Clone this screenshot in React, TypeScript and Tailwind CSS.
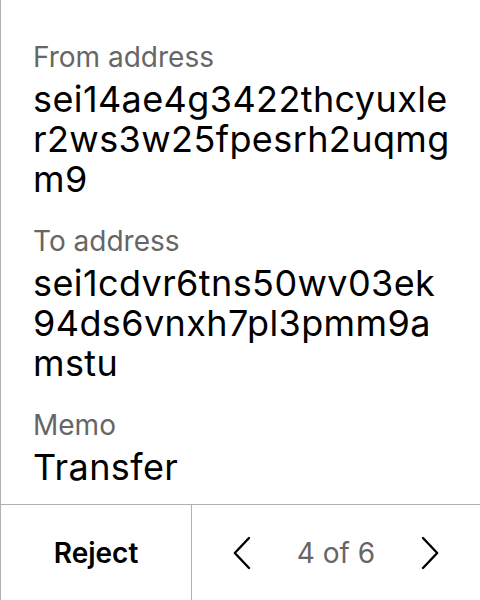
const fields = [
  { label: "From address", value: "sei14ae4g3422thcyuxler2ws3w25fpesrh2uqmgm9" },
  { label: "To address", value: "sei1cdvr6tns50wv03ek94ds6vnxh7pl3pmm9amstu" },
  { label: "Memo", value: "Transfer" },
];

function Chevron({ dir }: { dir: "left" | "right" }) {
  return (
    <svg width="18" height="34" viewBox="0 0 18 34" fill="none" stroke="black" strokeWidth="2.4" strokeLinecap="round" strokeLinejoin="round">
      <polyline points={dir === "left" ? "16,2 1.8,17 16,32" : "2,2 16.2,17 2,32"} />
    </svg>
  );
}

export default function App() {
  return (
    <div
      className="w-[480px] h-[600px] flex flex-col bg-white border-l border-[#b0b0b0]"
      style={{ fontFamily: "Inter, 'Liberation Sans', sans-serif" }}
    >
      <div className="flex-1 flex flex-col gap-[25px] pl-[32px] pr-[30px] pt-[40px]">
        {fields.map((f) => (
          <div key={f.label} className="flex flex-col gap-[5px]">
            <span className="text-[28px] leading-[34px] text-[#666666]">{f.label}</span>
            <span className="text-[36px] leading-[40px] tracking-[0.4px] text-black break-all">{f.value}</span>
          </div>
        ))}
      </div>
      <div className="h-[96px] flex border-t border-[#b0b0b0]">
        <button className="w-[191px] flex items-center justify-center text-[28px] font-semibold text-black border-r border-[#b0b0b0]">
          Reject
        </button>
        <div className="flex-1 flex items-center justify-between pl-[41px] pr-[41px]">
          <Chevron dir="left" />
          <span className="text-[28px] text-[#666666]">4 of 6</span>
          <Chevron dir="right" />
        </div>
      </div>
    </div>
  );
}
